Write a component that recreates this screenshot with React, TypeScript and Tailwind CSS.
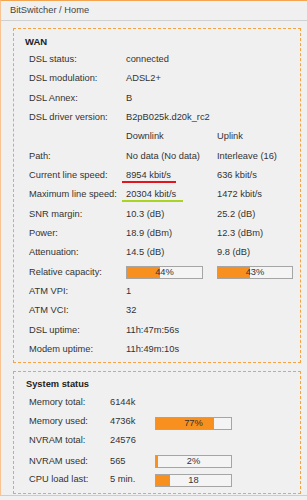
import React from "react";

function Bar({ pct, label, cls }: { pct: number; label: string; cls: string }) {
  return (
    <div className={"relative h-[13px] border border-[#a5a5a5] bg-[#f4f4f4] " + cls}>
      <div className="absolute left-0 top-0 bottom-0 bg-[#f7901e]" style={{ width: pct + "%" }} />
      <div className="relative text-center leading-[11px] text-[#333]">{label}</div>
    </div>
  );
}

type Row = { l: string; d?: React.ReactNode; u?: React.ReactNode };

const wanRows: Row[] = [
  { l: "DSL status:", d: "connected" },
  { l: "DSL modulation:", d: "ADSL2+" },
  { l: "DSL Annex:", d: "B" },
  { l: "DSL driver version:", d: <span className="whitespace-nowrap">B2pB025k.d20k_rc2</span> },
  { l: "", d: "Downlink", u: "Uplink" },
  { l: "Path:", d: "No data (No data)", u: "Interleave (16)" },
  {
    l: "Current line speed:",
    d: (
      <span className="relative inline-block">
        8954 kbit/s
        <span className="absolute left-[-4px] top-[12px] h-[2px] w-[54px] bg-[#e3141e]" />
      </span>
    ),
    u: "636 kbit/s",
  },
  {
    l: "Maximum line speed:",
    d: (
      <span className="relative inline-block">
        20304 kbit/s
        <span className="absolute left-[-4px] top-[12px] h-[2px] w-[61px] bg-[#a9d424]" />
      </span>
    ),
    u: "1472 kbit/s",
  },
  { l: "SNR margin:", d: "10.3 (dB)", u: "25.2 (dB)" },
  { l: "Power:", d: "18.9 (dBm)", u: "12.3 (dBm)" },
  { l: "Attenuation:", d: "14.5 (dB)", u: "9.8 (dB)" },
  {
    l: "Relative capacity:",
    d: <Bar pct={44} label="44%" cls="w-[77px]" />,
    u: <Bar pct={43} label="43%" cls="w-[76px]" />,
  },
  { l: "ATM VPI:", d: "1" },
  { l: "ATM VCI:", d: "32" },
  { l: "DSL uptime:", d: "11h:47m:56s" },
  { l: "Modem uptime:", d: "11h:49m:10s" },
];

export default function App() {
  return (
    <div className="w-[307px] h-[500px] bg-[#f0f0f0] font-['Liberation_Sans',Arial,sans-serif] text-[9.3px] text-[#333] overflow-hidden">
      <div className="h-[496px] border-t border-t-[#f5a44f] border-l border-b border-l-[#f8c291] border-b-[#f8c291]">
        <div className="h-[20px] border-b border-[#d0d0d0] pl-[9px] leading-[18px] text-[#444]">
          BitSwitcher / Home
        </div>

        <div className="ml-[12px] mt-[7px] w-[288px] h-[335px] border border-dashed border-[#f5a243]">
          <div className="h-[21.33px] pt-[6px] pl-[11px] leading-[14px] font-bold text-[9.5px] text-[#222]">WAN</div>
          {wanRows.map((r, i) => (
            <div key={i} className="flex h-[19.33px] items-center pl-[15px]">
              <div className="w-[97px] shrink-0">{r.l}</div>
              <div className="w-[91px] shrink-0">{r.d}</div>
              <div>{r.u}</div>
            </div>
          ))}
        </div>

        <div className="ml-[12px] mt-[8px] w-[288px] h-[123px] border border-dashed border-[#f5a243]">
          <div className="h-[21.2px] pt-[5.3px] pl-[12px] leading-[14px] font-bold text-[#222]">System status</div>
          <div className="flex h-[19px] items-center pl-[15px]">
            <div className="w-[81px] shrink-0">Memory total:</div>
            <div>6144k</div>
          </div>
          <div className="flex h-[19px] items-center pl-[15px]">
            <div className="w-[81px] shrink-0">Memory used:</div>
            <div className="w-[45px] shrink-0">4736k</div>
            <div className="mt-[3px]">
              <Bar pct={77} label="77%" cls="w-[77px]" />
            </div>
          </div>
          <div className="flex h-[19px] items-center pl-[15px]">
            <div className="w-[81px] shrink-0">NVRAM total:</div>
            <div>24576</div>
          </div>
          <div className="flex h-[23px] items-center pl-[15px]">
            <div className="w-[81px] shrink-0">NVRAM used:</div>
            <div className="w-[45px] shrink-0">565</div>
            <Bar pct={2} label="2%" cls="w-[77px]" />
          </div>
          <div className="flex h-[14.2px] items-center pl-[15px]">
            <div className="w-[81px] shrink-0">CPU load last:</div>
            <div className="w-[45px] shrink-0">5 min.</div>
            <div className="mt-[1px]">
              <Bar pct={18} label="18" cls="w-[77px]" />
            </div>
          </div>
        </div>
      </div>
    </div>
  );
}
